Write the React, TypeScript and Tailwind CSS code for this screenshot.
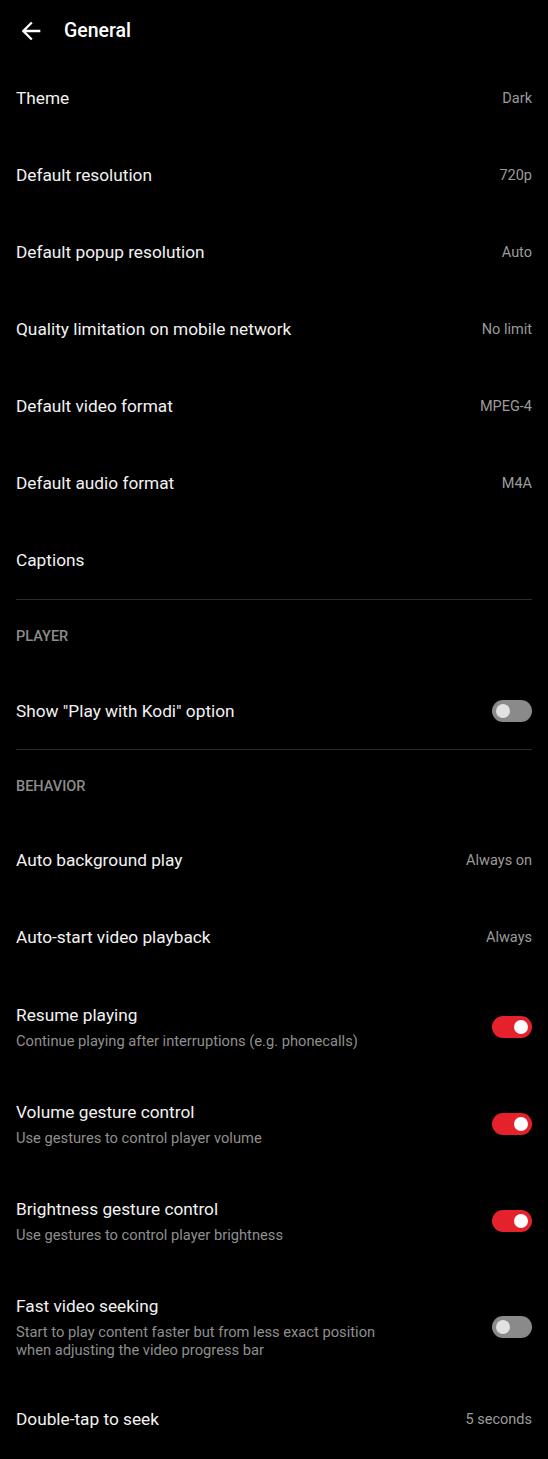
import React from "react";

type Row =
  | { kind: "value"; title: string; value?: string }
  | { kind: "toggle"; title: string; summary?: string; on: boolean };

const general: Row[] = [
  { kind: "value", title: "Theme", value: "Dark" },
  { kind: "value", title: "Default resolution", value: "720p" },
  { kind: "value", title: "Default popup resolution", value: "Auto" },
  { kind: "value", title: "Quality limitation on mobile network", value: "No limit" },
  { kind: "value", title: "Default video format", value: "MPEG-4" },
  { kind: "value", title: "Default audio format", value: "M4A" },
  { kind: "value", title: "Captions" },
];

const player: Row[] = [{ kind: "toggle", title: 'Show "Play with Kodi" option', on: false }];

const behavior: Row[] = [
  { kind: "value", title: "Auto background play", value: "Always on" },
  { kind: "value", title: "Auto-start video playback", value: "Always" },
  {
    kind: "toggle",
    title: "Resume playing",
    summary: "Continue playing after interruptions (e.g. phonecalls)",
    on: true,
  },
  {
    kind: "toggle",
    title: "Volume gesture control",
    summary: "Use gestures to control player volume",
    on: true,
  },
  {
    kind: "toggle",
    title: "Brightness gesture control",
    summary: "Use gestures to control player brightness",
    on: true,
  },
  {
    kind: "toggle",
    title: "Fast video seeking",
    summary: "Start to play content faster but from less exact position when adjusting the video progress bar",
    on: false,
  },
  { kind: "value", title: "Double-tap to seek", value: "5 seconds" },
];

function Toggle({ on }: { on: boolean }) {
  return (
    <div
      className={`w-[40px] h-[22px] rounded-full flex items-center px-[4px] shrink-0 ${
        on ? "bg-[#e5222b] justify-end" : "bg-[#8a8a8a] justify-start"
      }`}
    >
      <div className={`w-[14px] h-[14px] rounded-full ${on ? "bg-white" : "bg-[#e2e2e2]"}`} />
    </div>
  );
}

function SettingRow({ row }: { row: Row }) {
  if (row.kind === "value") {
    return (
      <div className="h-[77px] px-4 flex items-center justify-between">
        <span className="text-[17.25px] text-[#f2f2f2]">{row.title}</span>
        {row.value && <span className="text-[14.5px] text-[#9b9b9b]">{row.value}</span>}
      </div>
    );
  }
  return (
    <div
      className={`px-4 flex items-center justify-between ${
        row.summary ? "pt-[27px] pb-[22.5px]" : "h-[77px]"
      }`}
    >
      <div className="flex flex-col">
        <span className="text-[17.25px] leading-[24px] text-[#f2f2f2]">{row.title}</span>
        {row.summary && (
          <span className="mt-[6px] max-w-[390px] text-[14.7px] leading-[17.5px] text-[#8f8f8f]">
            {row.summary}
          </span>
        )}
      </div>
      <Toggle on={row.on} />
    </div>
  );
}

function SectionHeader({ label }: { label: string }) {
  return (
    <div className="h-[72px] px-4 pt-[2px] flex items-center">
      <span className="text-[14.5px] font-medium text-[#8c8c8c]">{label}</span>
    </div>
  );
}

export default function App() {
  return (
    <div
      className="w-[548px] min-h-[1459px] bg-black text-white"
      style={{ fontFamily: "Roboto, 'Noto Sans', sans-serif" }}
    >
      {/* toolbar */}
      <div className="h-[60px] pt-[1px] flex items-center">
        <svg viewBox="0 0 24 24" className="w-[28px] h-[28px] ml-[17px]" fill="#ffffff">
          <path d="M20 11H7.83l5.59-5.59L12 4l-8 8 8 8 1.41-1.41L7.83 13H20v-2z" />
        </svg>
        <span className="ml-[19px] text-[19.5px] font-medium text-white">General</span>
      </div>

      {general.map((r) => (
        <SettingRow key={r.title} row={r} />
      ))}

      <div className="mx-4 h-px bg-[#2b2b2b]" />
      <SectionHeader label="PLAYER" />
      {player.map((r) => (
        <SettingRow key={r.title} row={r} />
      ))}

      <div className="mx-4 h-px bg-[#2b2b2b]" />
      <SectionHeader label="BEHAVIOR" />
      {behavior.map((r) => (
        <SettingRow key={r.title} row={r} />
      ))}
    </div>
  );
}
